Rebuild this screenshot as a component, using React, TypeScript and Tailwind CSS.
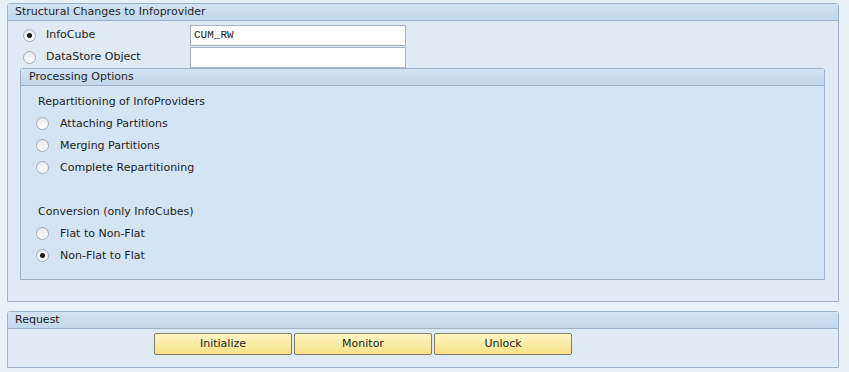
import React from "react";

const font = { fontFamily: "Tahoma, 'DejaVu Sans', sans-serif" };

const Radio = ({ checked }: { checked?: boolean }) => (
  <span className="flex h-[13px] w-[13px] shrink-0 items-center justify-center rounded-full border border-[#a3adb8] bg-gradient-to-b from-[#e6eaee] to-[#ffffff]">
    {checked && <span className="h-[5px] w-[5px] rounded-full bg-[#1a1a1a]" />}
  </span>
);

const Header = ({ label, indent }: { label: string; indent: string }) => (
  <div
    className={`flex h-[17px] items-center border-b border-[#9fb3c8] bg-gradient-to-b from-[#d4e3f1] to-[#c2d7ec] pt-[1px] text-[11px] text-[#1d1d1d] ${indent}`}
  >
    {label}
  </div>
);

const Option = ({ label, checked }: { label: string; checked?: boolean }) => (
  <div className="flex h-[22px] items-center pl-[15px]">
    <Radio checked={checked} />
    <span className="ml-[11px] pt-[2px]">{label}</span>
  </div>
);

export default function App() {
  return (
    <div
      className="h-[372px] w-[849px] bg-[#e8f0f8] px-[7px] pt-[3px] text-[11px] text-[#1d1d1d]"
      style={font}
    >
      <div className="h-[299px] w-[832px] rounded-t-[3px] border border-[#9fb3c8] bg-[#dfeaf5]">
        <Header label="Structural Changes to Infoprovider" indent="pl-[7px]" />
        <div className="px-[12px] pt-[3px]">
          <div className="flex h-[22px] items-center">
            <span className="ml-[3px]">
              <Radio checked />
            </span>
            <span className="ml-[10px] w-[144px] pt-[1px]">InfoCube</span>
            <div
              className="flex h-[21px] w-[216px] items-center border border-[#a8b4c0] bg-white pl-[3px] text-[11px]"
              style={{ fontFamily: "'Liberation Mono', monospace" }}
            >
              CUM_RW
            </div>
          </div>
          <div className="flex h-[22px] items-center">
            <span className="ml-[3px]">
              <Radio />
            </span>
            <span className="ml-[10px] w-[144px] pt-[1px]">DataStore Object</span>
            <div className="h-[21px] w-[216px] border border-[#a8b4c0] bg-white" />
          </div>
          <div className="h-[212px] w-[805px] rounded-t-[3px] border border-[#9fb3c8] bg-[#d4e4f3]">
            <Header label="Processing Options" indent="pl-[8px]" />
            <div className="pt-[4px]">
              <div className="flex h-[22px] items-center pl-[17px] pt-[2px]">Repartitioning of InfoProviders</div>
              <Option label="Attaching Partitions" />
              <Option label="Merging Partitions" />
              <Option label="Complete Repartitioning" />
              <div className="h-[22px]" />
              <div className="flex h-[22px] items-center pl-[17px] pt-[2px]">Conversion (only InfoCubes)</div>
              <Option label="Flat to Non-Flat" />
              <Option label="Non-Flat to Flat" checked />
            </div>
          </div>
        </div>
      </div>
      <div className="mt-[9px] h-[57px] w-[832px] rounded-t-[3px] border border-[#9fb3c8] bg-[#dfeaf5]">
        <Header label="Request" indent="pl-[7px]" />
        <div className="flex gap-[2px] pl-[146px] pt-[4px]">
          {["Initialize", "Monitor", "Unlock"].map((b) => (
            <button
              key={b}
              className="flex h-[22px] w-[138px] items-center justify-center rounded-[2px] border border-[#7f7f6a] bg-gradient-to-b from-[#fff6c4] to-[#f7e185] pt-[1px] text-[11px] text-[#1d1d1d]"
            >
              {b}
            </button>
          ))}
        </div>
      </div>
    </div>
  );
}
